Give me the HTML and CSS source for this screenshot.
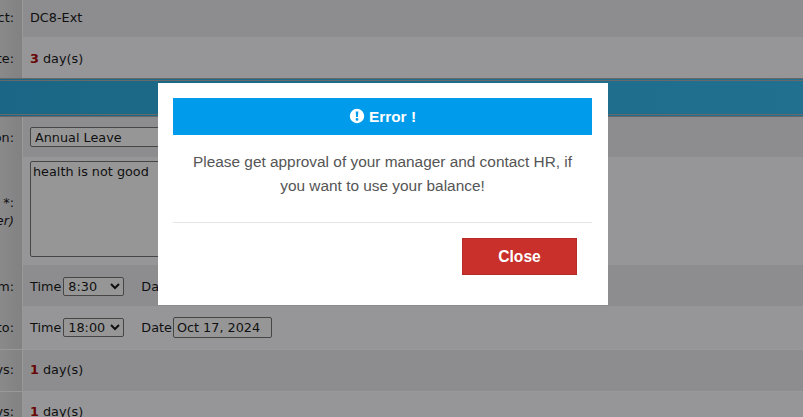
FILE: index.html
```html
<!DOCTYPE html>
<html lang="en">
<head>
<meta charset="utf-8">
<title>Leave request</title>
<link rel="stylesheet" href="styles.css">
</head>
<body>
<main class="form">
  <div class="row row-dark row-first">
    <div class="label"><span>Project:</span></div>
    <div class="value"><span>DC8-Ext</span></div>
  </div>
  <div class="row row-light row-balance">
    <div class="label"><span>Rate:</span></div>
    <div class="value"><span><b class="num">3</b> day(s)</span></div>
  </div>
  <div class="band"></div>
  <div class="row row-dark row-reason">
    <div class="label"><span>Reason:</span></div>
    <div class="value"><select class="field select-reason"><option>Annual Leave</option></select></div>
  </div>
  <div class="row row-light row-detail">
    <div class="label label-stack"><span>Details *:</span><em>(for manager)</em></div>
    <div class="value value-top"><textarea class="field area">health is not good</textarea></div>
  </div>
  <div class="row row-dark row-time row-from">
    <div class="label"><span>From:</span></div>
    <div class="value">
      <label class="pick"><span>Time</span><select class="field select-time"><option>8:30</option></select></label>
      <label class="pick pick-date"><span>Date</span><input class="field date" value="Oct 16, 2024"></label>
    </div>
  </div>
  <div class="row row-light row-time">
    <div class="label"><span>Up to:</span></div>
    <div class="value">
      <label class="pick"><span>Time</span><select class="field select-time"><option>18:00</option></select></label>
      <label class="pick pick-date"><span>Date</span><input class="field date" value="Oct 17, 2024"></label>
    </div>
  </div>
  <div class="row row-dark row-days">
    <div class="label"><span>Total days:</span></div>
    <div class="value"><span><b class="num">1</b> day(s)</span></div>
  </div>
  <div class="row row-light row-days">
    <div class="label"><span>Paid days:</span></div>
    <div class="value"><span><b class="num">1</b> day(s)</span></div>
  </div>
</main>

<div class="overlay">
  <section class="modal">
    <header class="modal-head">
      <svg class="alert" viewBox="0 0 16 16" aria-hidden="true">
        <path fill="#fff" fill-rule="evenodd" d="M8 .8a7.200 7.200 0 1 0 0 14.400A7.200 7.200 0 0 0 8 .8zM6.700 3.400h2.600l-.4 5.700H7.100zM8 10a1.400 1.400 0 1 1 0 2.800A1.400 1.400 0 0 1 8 10z"/>
      </svg>
      <span>Error !</span>
    </header>
    <p class="modal-text">Please get approval of your manager and contact HR, if you want to use your balance!</p>
    <footer class="modal-foot">
      <button class="close" type="button">Close</button>
    </footer>
  </section>
</div>
</body>
</html>
```

FILE: styles.css
```css
* { box-sizing: border-box; }

html, body {
  margin: 0;
  height: 100%;
  overflow: hidden;
}

body {
  background: #fff;
  font-family: "DejaVu Sans", sans-serif;
  font-size: 12.8px;
  color: #1a1a1a;
}

.form {
  display: flex;
  flex-direction: column;
}

.row {
  display: grid;
  grid-template-columns: 22px 1fr;
  column-gap: 1px;
  background: #fff;
}

.row-dark .value { background: #ebecef; }
.row-light .value { background: #fbfbff; }

.row-first { height: 37px; }
.row-balance { height: 41px; }
.row-reason { height: 40px; }
.row-detail { height: 108px; }
.row-time { height: 41px; }
.row-days { height: 41px; margin-top: 1px; }
.row-time + .row-time { height: 43px; }

.row-first > *,
.row-days > * { padding-bottom: 2px; }
.row-balance > *,
.row-from > * { padding-top: 2px; }

.label {
  display: flex;
  flex-direction: column;
  align-items: flex-end;
  justify-content: center;
  overflow: hidden;
  padding-right: 8px;
  white-space: nowrap;
  background: linear-gradient(90deg, #e6e6e8, #d8d8da);
}

.label-stack em { margin-top: 3px; }

.value {
  display: flex;
  align-items: center;
  padding-left: 7px;
  white-space: pre;
}

.value-top {
  align-items: flex-start;
  padding-top: 4px;
}

.num { color: #b00a0a; }

.band {
  height: 39px;
  border-top: 3px double #aeaeb0;
  border-bottom: 3px double #aeaeb0;
  background: linear-gradient(90deg, #2eabdf, #38bbf0);
}

.field {
  font-family: "DejaVu Sans", sans-serif;
  font-size: 12.8px;
  color: #1a1a1a;
  background: #fbfbfc;
  border: 1px solid #767676;
  border-radius: 2px;
}

.select-reason {
  width: 220px;
  height: 20px;
}

.area {
  width: 260px;
  height: 96px;
  padding: 2px;
  resize: none;
}

.pick {
  display: flex;
  align-items: center;
  gap: 2px;
}

.pick-date {
  gap: 1px;
  margin-left: 17px;
}

.select-time {
  width: 61px;
  height: 19px;
  padding: 0;
}

.date {
  width: 99px;
  height: 21px;
  padding: 0 3px;
}

.overlay {
  position: fixed;
  inset: 0;
  display: flex;
  justify-content: flex-start;
  align-items: flex-start;
  padding: 83px 0 0 158px;
  background: rgba(0, 0, 0, 0.4);
}

.modal {
  width: 450px;
  height: 222px;
  padding: 15px 16px 0 15px;
  background: #fff;
  font-family: "Liberation Sans", Arial, sans-serif;
}

.modal-head {
  display: flex;
  align-items: center;
  justify-content: center;
  gap: 4px;
  height: 37px;
  background: #009ceb;
  color: #fff;
  font-size: 15.4px;
  font-weight: 700;
}

.alert {
  width: 16px;
  height: 16px;
  margin-top: -2px;
}

.modal-text {
  margin: 15px 0 0;
  padding: 0 15px;
  font-size: 15.4px;
  line-height: 24px;
  text-align: center;
  color: #555;
}

.modal-foot {
  display: flex;
  justify-content: flex-end;
  margin-top: 24px;
  padding: 15px 15px 0;
  border-top: 1px solid #e5e5e5;
}

.close {
  width: 115px;
  height: 37px;
  background: #c9302c;
  border: 1px solid #b52b27;
  color: #fff;
  font-family: "Liberation Sans", Arial, sans-serif;
  font-size: 15.6px;
  font-weight: 700;
}
```
